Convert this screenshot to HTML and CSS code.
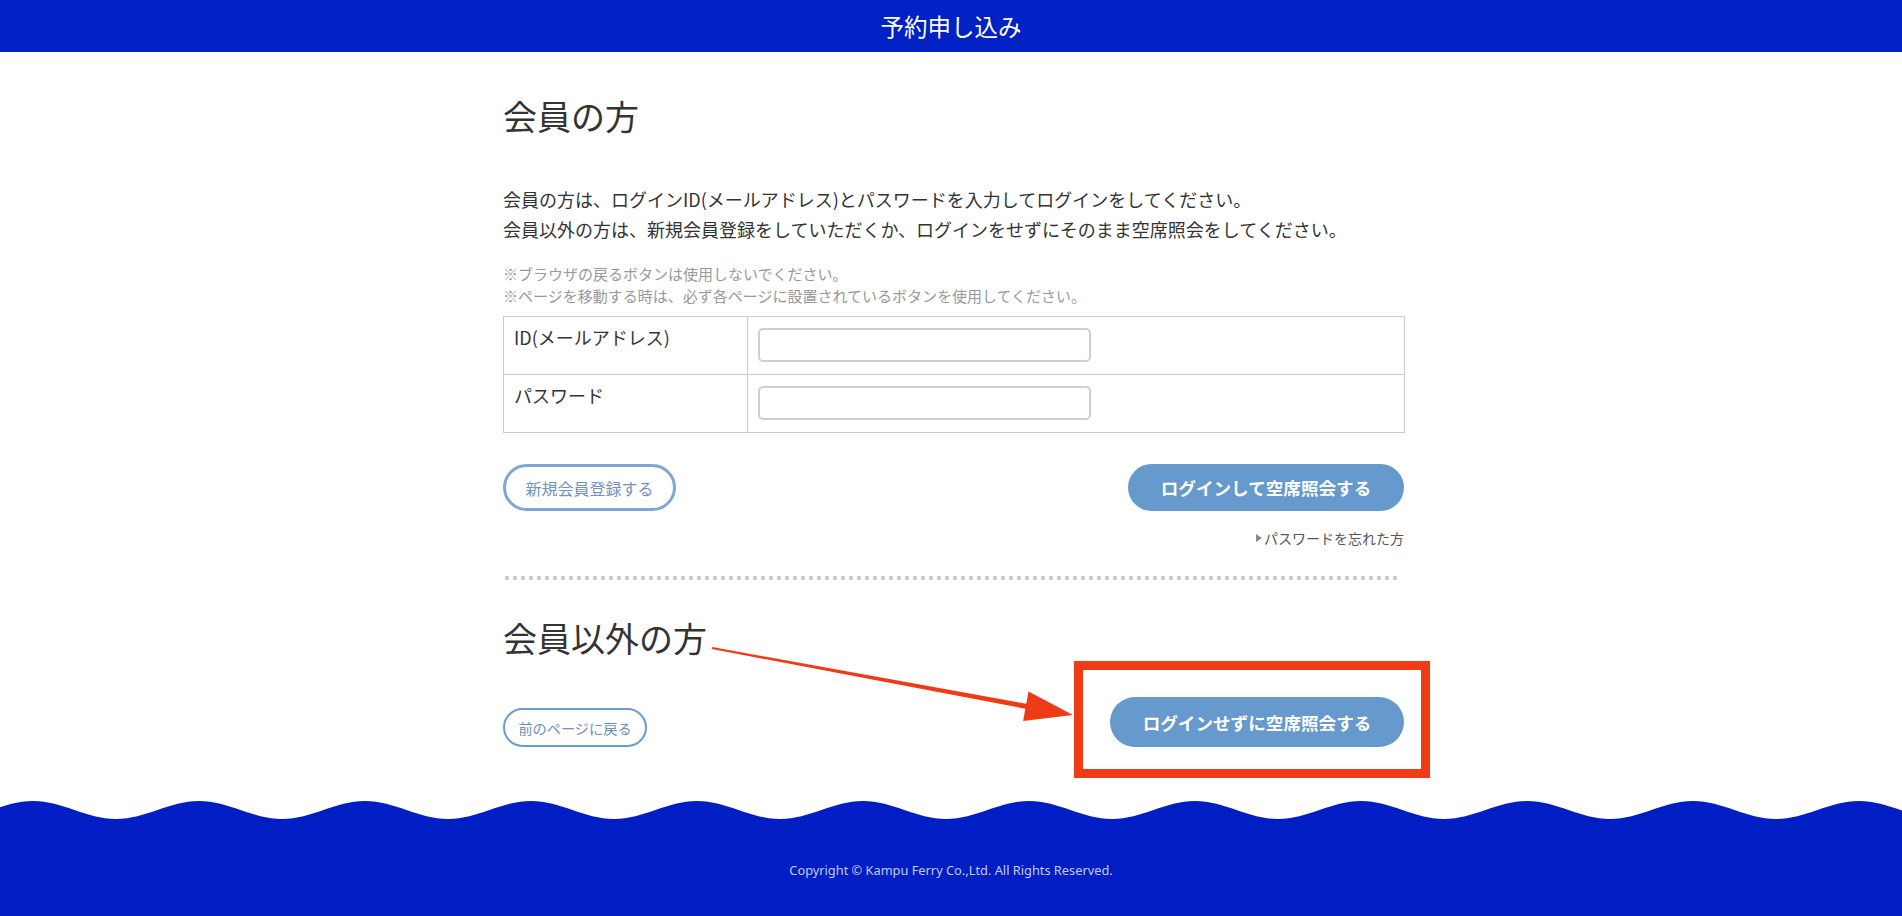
FILE: index.html
```html
<!DOCTYPE html>
<html lang="ja">
<head>
<meta charset="utf-8">
<title>予約申し込み</title>
<link rel="stylesheet" href="styles.css">
</head>
<body>
<header class="site-header">
  <h1 class="site-title">予約申し込み</h1>
</header>

<main class="content">
  <section class="member">
    <h2 class="section-title">会員の方</h2>
    <p class="lead">会員の方は、ログインID(メールアドレス)とパスワードを入力してログインをしてください。<br>会員以外の方は、新規会員登録をしていただくか、ログインをせずにそのまま空席照会をしてください。</p>
    <p class="notes">※ブラウザの戻るボタンは使用しないでください。<br>※ページを移動する時は、必ず各ページに設置されているボタンを使用してください。</p>
    <table class="login-table">
      <tr>
        <th class="label-cell">ID(メールアドレス)</th>
        <td class="input-cell"><input class="text-input" type="text"></td>
      </tr>
      <tr>
        <th class="label-cell">パスワード</th>
        <td class="input-cell"><input class="text-input" type="password"></td>
      </tr>
    </table>
    <div class="actions">
      <a class="btn btn-outline btn-register" href="#">新規会員登録する</a>
      <a class="btn btn-primary btn-login" href="#">ログインして空席照会する</a>
    </div>
    <p class="forgot"><a class="forgot-link" href="#"><span class="tri"></span>パスワードを忘れた方</a></p>
  </section>

  <div class="dots"></div>

  <section class="guest">
    <h2 class="section-title">会員以外の方</h2>
    <svg class="arrow" width="380" height="90" viewBox="0 0 380 90" aria-hidden="true">
      <polygon fill="#ee3a16" points="9.18,9.02 323.26,65.74 325.5,53.4 370,77 320.1,83.0 322.34,70.66 8.82,10.98"/>
    </svg>
    <div class="actions actions-guest">
      <a class="btn btn-outline btn-back" href="#">前のページに戻る</a>
      <span class="btn-wrap">
        <a class="btn btn-primary btn-guest" href="#">ログインせずに空席照会する</a>
        <span class="callout"></span>
      </span>
    </div>
  </section>
</main>

<footer class="site-footer">
  <svg class="wave" width="100%" height="20" aria-hidden="true">
    <defs>
      <pattern id="wavePattern" x="33" y="0" width="166" height="20" patternUnits="userSpaceOnUse">
        <path d="M0 1 C30 1 53 19 83 19 C113 19 136 1 166 1 V20 H0 Z" fill="#001ec4"/>
      </pattern>
    </defs>
    <rect x="0" y="0" width="100%" height="20" fill="url(#wavePattern)"/>
  </svg>
  <div class="footer-body">
    <p class="copyright">Copyright © Kampu Ferry Co.,Ltd. All Rights Reserved.</p>
  </div>
</footer>
</body>
</html>
```

FILE: styles.css
```css
* {
  box-sizing: border-box;
}

html, body {
  margin: 0;
  padding: 0;
  background: #fff;
}

body {
  font-family: "Noto Sans CJK JP", "Noto Sans", sans-serif;
  color: #333;
}

.site-header {
  background: #0021c4;
  height: 52px;
}

.site-title {
  margin: 0;
  text-align: center;
  color: #fff;
  font-size: 23.5px;
  font-weight: 400;
  line-height: 52px;
}

.content {
  width: 902px;
  margin-left: calc(50% - 448px);
}

.section-title {
  margin: 44px 0 0;
  font-size: 34px;
  font-weight: 400;
  line-height: 40px;
  color: #333;
}

.lead {
  margin: 48px 0 0;
  font-size: 18px;
  line-height: 30px;
}

.notes {
  margin: 19px 0 0;
  font-size: 15px;
  line-height: 22px;
  color: #999;
}

.login-table {
  margin-top: 9px;
  width: 902px;
  border-collapse: collapse;
  border: 1px solid #ccc;
}

.label-cell {
  width: 244px;
  border: 1px solid #ccc;
  padding: 7px 10px;
  text-align: left;
  vertical-align: top;
  font-weight: 400;
  font-size: 18px;
  line-height: 26px;
  color: #333;
}

.input-cell {
  border: 1px solid #ccc;
  padding: 11px 10px 12px;
  vertical-align: top;
}

.text-input {
  display: block;
  width: 333px;
  height: 34px;
  border: 2px solid #cfcfcf;
  border-radius: 5px;
  background: #fff;
  margin: 0;
}

.actions {
  margin-top: 31px;
  display: flex;
  justify-content: space-between;
  align-items: center;
  padding-right: 1px;
}

.btn {
  display: inline-flex;
  align-items: center;
  justify-content: center;
  border-radius: 999px;
  text-decoration: none;
}

.btn-outline {
  background: #fff;
}

.btn-register {
  width: 173px;
  height: 47px;
  border: 3px solid #7fa7d3;
  color: #7291bb;
  font-size: 16px;
}

.btn-primary {
  background: #6699cc;
  color: #fff;
  font-weight: 700;
  font-size: 17.6px;
}

.btn-login {
  width: 276px;
  height: 47px;
}

.forgot {
  margin: 15px 0 0;
  text-align: right;
  font-size: 14px;
  line-height: 20px;
  padding-right: 1px;
}

.forgot-link {
  color: #555;
  text-decoration: none;
  display: inline-flex;
  align-items: center;
}

.tri {
  display: inline-block;
  width: 0;
  height: 0;
  border-top: 4px solid transparent;
  border-bottom: 4px solid transparent;
  border-left: 6px solid #888;
  margin-right: 2px;
}

.dots {
  margin-top: 28px;
  width: 896px;
  height: 4px;
  background-image: radial-gradient(circle, #c8c8c8 2px, transparent 2.3px);
  background-size: 8px 4px;
  background-repeat: repeat-x;
}

.guest {
  position: relative;
}

.guest .section-title {
  margin-top: 38px;
}

.arrow {
  position: absolute;
  left: 200px;
  top: 20px;
}

.actions-guest {
  margin-top: 39px;
  align-items: flex-end;
}

.btn-back {
  width: 144px;
  height: 39px;
  border: 2px solid #6b9bcf;
  color: #6a8fc0;
  font-size: 14.2px;
}

.btn-wrap {
  position: relative;
  display: inline-block;
}

.btn-guest {
  width: 294px;
  height: 50px;
}

.callout {
  position: absolute;
  left: -36px;
  right: -26px;
  top: -36px;
  bottom: -31px;
  border: 9px solid #f03c16;
  pointer-events: none;
}

.site-footer {
  margin-top: 53px;
}

.wave {
  display: block;
}

.footer-body {
  background: #001ec4;
  height: 98px;
  padding-top: 41px;
}

.copyright {
  margin: 0;
  text-align: center;
  color: #c3cbf3;
  font-family: "Noto Sans", sans-serif;
  font-size: 12.8px;
  line-height: 18px;
}
```
